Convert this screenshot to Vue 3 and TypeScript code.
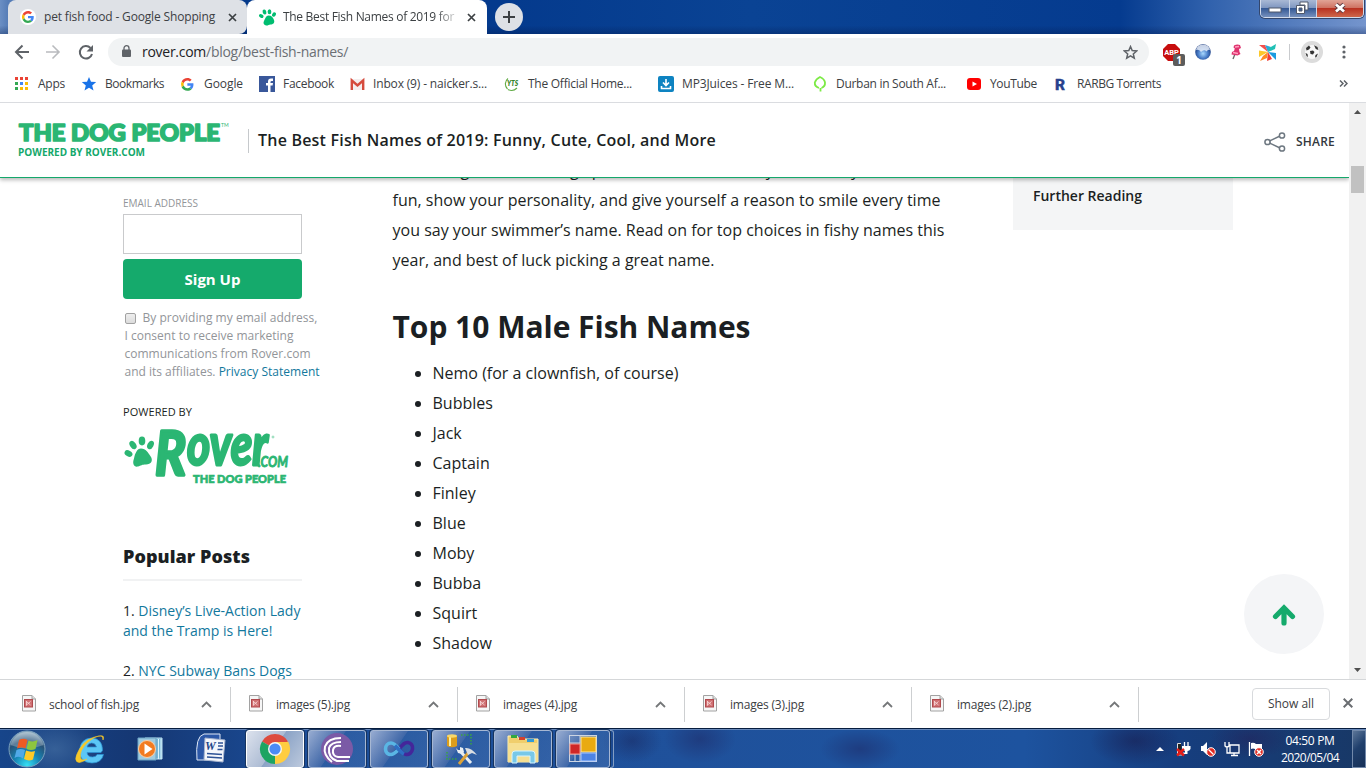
<script setup lang="ts">
interface Bookmark { label: string; icon: string; slot: number; fit: number }
interface FitTarget extends HTMLElement { textContent: string }

const bookmarks: Bookmark[] = [
  { label: 'Apps', icon: 'apps', slot: 67, fit: 27 },
  { label: 'Bookmarks', icon: 'star', slot: 99, fit: 59 },
  { label: 'Google', icon: 'google', slot: 79, fit: 39 },
  { label: 'Facebook', icon: 'facebook', slot: 90, fit: 51 },
  { label: 'Inbox (9) - naicker.s...', icon: 'gmail', slot: 155, fit: 114 },
  { label: 'The Official Home...', icon: 'yts', slot: 154, fit: 104 },
  { label: 'MP3Juices - Free M...', icon: 'mp3', slot: 154, fit: 112 },
  { label: 'Durban in South Af...', icon: 'tree', slot: 154, fit: 110 },
  { label: 'YouTube', icon: 'youtube', slot: 87, fit: 47 },
  { label: 'RARBG Torrents', icon: 'rarbg', slot: 110, fit: 84 },
]

const maleNames: string[] = [
  'Nemo (for a clownfish, of course)', 'Bubbles', 'Jack', 'Captain', 'Finley',
  'Blue', 'Moby', 'Bubba', 'Squirt', 'Shadow',
]

const downloads: { name: string; fit: number }[] = [
  { name: 'school of fish.jpg', fit: 90 },
  { name: 'images (5).jpg', fit: 74 },
  { name: 'images (4).jpg', fit: 74 },
  { name: 'images (3).jpg', fit: 74 },
  { name: 'images (2).jpg', fit: 74 },
]

const pinned: string[] = ['ie', 'wmp', 'word']
const running: string[] = ['chrome', 'bittorrent', 'vs', 'tools', 'explorer', 'forms']

// Spreads letter spacing so that a label takes exactly the given width.
const vFit = {
  mounted(el: FitTarget, binding: { value: number }) {
    const range = document.createRange()
    range.selectNodeContents(el)
    const natural = range.getBoundingClientRect().width
    el.style.letterSpacing = `${(binding.value - natural) / el.textContent.trim().length}px`
  },
}
</script>

<template>
  <div class="screen">
    <header class="tabstrip">
      <div class="tab tab-idle">
        <span class="favicon-disc">
          <svg width="12" height="12" viewBox="0 0 48 48"><path fill="#ea4335" d="M24 9.5c3.5 0 6.700 1.200 9.200 3.600l6.900-6.900C35.900 2.400 30.500 0 24 0 14.600 0 6.500 5.400 2.600 13.200l8 6.200C12.400 13.700 17.700 9.500 24 9.500z"/><path fill="#4285f4" d="M47 24.500c0-1.600-.2-3.100-.4-4.500H24v9h12.900c-.6 3-2.300 5.500-4.800 7.200l7.700 6C44.400 38 47 31.800 47 24.500z"/><path fill="#fbbc05" d="M10.500 28.600A14.500 14.500 0 0 1 10.500 19.400l-8-6.200A24 24 0 0 0 2.500 34.800z"/><path fill="#34a853" d="M24 48c6.500 0 11.900-2.100 15.900-5.800l-7.700-6c-2.200 1.500-4.900 2.300-8.200 2.300-6.300 0-11.600-4.200-13.500-9.900l-8 6.200C6.500 42.600 14.600 48 24 48z"/></svg>
        </span>
        <span v-fit="171" class="tab-title">pet fish food - Google Shopping</span>
        <svg class="tab-close" width="9" height="9" viewBox="0 0 9 9"><path d="M1 1l7 7M8 1l-7 7" stroke="#3c4043" stroke-width="1.7"/></svg>
      </div>
      <div class="tab tab-active">
        <svg class="paw" width="17" height="17" viewBox="0 0 34 34" fill="#00bd70"><ellipse cx="4.500" cy="14" rx="3.500" ry="4.700" transform="rotate(-60 4.500 14)"/><ellipse cx="11" cy="6" rx="3.700" ry="5" transform="rotate(-18 11 6)"/><ellipse cx="21" cy="5.500" rx="3.700" ry="5"/><ellipse cx="30" cy="11" rx="3.500" ry="4.800" transform="rotate(30 30 11)"/><path d="M19 13c6 0 9 4 11 9 2 6-2 9-7 9-4 0-5 3-9 2-5-1-6-6-4-9 2-4 4-11 9-11z"/></svg>
        <span v-fit="171" class="tab-title tab-fade">The Best Fish Names of 2019 for</span>
        <svg class="tab-close" width="9" height="9" viewBox="0 0 9 9"><path d="M1 1l7 7M8 1l-7 7" stroke="#3c4043" stroke-width="1.7"/></svg>
      </div>
      <span class="new-tab"><svg width="12" height="12" viewBox="0 0 12 12"><path d="M6 0v12M0 6h12" stroke="#3c4043" stroke-width="2"/></svg></span>
      <div class="window-controls">
        <span class="wc wc-min"><svg width="14" height="6" viewBox="0 0 14 6"><rect x="1" y="1" width="12" height="4" fill="#fff" stroke="#51596b"/></svg></span>
        <span class="wc wc-restore"><svg width="14" height="14" viewBox="0 0 14 14"><path d="M5 1h8v8h-3v-5h-5z" fill="#fff" stroke="#51596b"/><path fill-rule="evenodd" d="M1.500 4.500h8v8h-8zM4 7v3h3V7z" fill="#fff" stroke="#51596b"/></svg></span>
        <span class="wc wc-close"><svg width="14" height="12" viewBox="0 0 14 12"><path d="M3 2.500l8 7M11 2.500l-8 7" stroke="#5d3a40" stroke-width="4.500"/><path d="M3 2.500l8 7M11 2.500l-8 7" stroke="#fff" stroke-width="2.800"/></svg></span>
      </div>
    </header>

    <div class="toolbar">
      <svg class="nav-icons" width="82" height="18" viewBox="0 0 82 18" fill="none">
        <path d="M15 9H2.500M8.500 2.500L2 9l6.500 6.500" stroke="#5f6368" stroke-width="2"/>
        <path d="M32 9h12.500M38.500 2.500L45 9l-6.500 6.500" stroke="#b9bbbe" stroke-width="1.600"/>
        <path d="M76.500 5A6.200 6.200 0 1 0 78 11" stroke="#5f6368" stroke-width="2"/><path d="M79 2v6.500h-6.500z" fill="#5f6368"/>
      </svg>
      <div class="omnibox">
        <svg class="lock" width="9" height="12" viewBox="0 0 9 12"><rect y="4.500" width="9" height="7.500" rx="1" fill="#5f6368"/><path d="M2 5V3.200a2.500 2.500 0 0 1 5 0V5" fill="none" stroke="#5f6368" stroke-width="1.300"/></svg>
        <span v-fit="206" class="url"><b>rover.com</b>/blog/best-fish-names/</span>
        <svg class="bookmark-star" width="15" height="15" viewBox="0 0 15 15"><path d="M7.500 1.600l1.700 4 4.400.4-3.300 2.900 1 4.300-3.800-2.300-3.800 2.300 1-4.300L1.400 6l4.400-.4z" fill="none" stroke="#5f6368" stroke-width="1.500"/></svg>
      </div>
      <div class="extensions">
        <span class="abp"><svg width="17" height="17" viewBox="0 0 17 17"><path d="M5 0h7l5 5v7l-5 5H5l-5-5V5z" fill="#c70d0d"/><text x="8.500" y="11.300" font-size="7.500" font-weight="700" text-anchor="middle" fill="#fff" font-family="Roboto, sans-serif">ABP</text></svg><i>1</i></span>
        <svg class="globe" width="16" height="16" viewBox="0 0 16 16"><defs><radialGradient id="globe" cx=".5" cy=".6" r=".55"><stop offset="0" stop-color="#a9d9ff"/><stop offset=".55" stop-color="#4b7fc9"/><stop offset="1" stop-color="#1e3f83"/></radialGradient></defs><circle cx="8" cy="8" r="7.800" fill="url(#globe)"/><path d="M1 6Q2 .8 8 .700T15 6Q13 5 11.500 7.500 9 5 6 8 4 5 1 6z" fill="#f1f5fb" opacity=".8"/></svg>
        <svg class="pin" width="12" height="16" viewBox="0 0 12 16"><path d="M5 10l-2 5" stroke="#666" stroke-width="1.300"/><path d="M4 1.500Q7 0 10 1l1 3-2 1 .5 3 1 2-3 1.500-6-1L2 8l2-1 .8-2.500L3.500 3.500z" fill="#df3470"/><path d="M5 3l4-.5M3 8.500l5 1" stroke="#ff9fbd" stroke-width="1.300"/></svg>
        <svg class="pinwheel" width="17" height="17" viewBox="0 0 17 17"><path d="M0 1h6l3 7z" fill="#f3504c"/><path d="M6 1l6 2-3 5z" fill="#2aa8d8"/><path d="M9 8L10 4l7-4-1 5z" fill="#1fc0b5"/><path d="M9 8l8 1v7z" fill="#1b9be0"/><path d="M9 8l-1 6-7 3 3-5z" fill="#ff8a22"/><path d="M9 8l4 7-5 2z" fill="#f13d38"/><path d="M0 6.500L9 8l-9 5z" fill="#fcc82b"/></svg>
        <span class="divider"></span>
        <svg class="avatar" width="22" height="22" viewBox="0 0 22 22"><circle cx="11" cy="11" r="11" fill="#dcdcdc"/><circle cx="11" cy="11" r="7" fill="#f8f8f8"/><path d="M5 7l3-2.500 1.500 2L8 8.500l-2.500 1zM13 4.200l3.500 1.800.8 3-2.500-1zM9 10l3-.5 1.500 1.500-1.500 2.500-2.500-.5zM4.500 12l2 1 .5 3-1.500-1zM14.500 14l2.500-1.500-1.500 3.500-1.500.5z" fill="#333"/></svg>
        <svg class="kebab" width="4" height="14" viewBox="0 0 4 14" fill="#5f6368"><circle cx="2" cy="2" r="1.600"/><circle cx="2" cy="7" r="1.600"/><circle cx="2" cy="12" r="1.600"/></svg>
      </div>
    </div>

    <nav class="bookmarks">
      <span v-for="b in bookmarks" :key="b.label" class="bookmark" :style="{ width: b.slot + 'px' }">
        <svg width="16" height="16" viewBox="0 0 16 16">
          <template v-if="b.icon === 'apps'"><path fill="#ea4335" d="M1 1h3v3H1zM6 1h3v3H6zM11 1h3v3h-3z"/><path fill="#34a853" d="M1 6h3v3H1zM1 11h3v3H1z"/><path fill="#4285f4" d="M6 6h3v3H6z"/><path fill="#fbbc05" d="M11 6h3v3h-3zM6 11h3v3H6zM11 11h3v3h-3z"/></template>
          <path v-else-if="b.icon === 'star'" fill="#1a73e8" d="M8 1l2 4.700 5.200.4-4 3.400 1.300 5L8 11.800l-4.500 2.700 1.300-5-4-3.400L6 5.700z"/>
          <g v-else-if="b.icon === 'google'" transform="translate(1 2) scale(.265)"><path fill="#ea4335" d="M24 9.500c3.500 0 6.700 1.200 9.200 3.600l6.900-6.900C35.900 2.400 30.500 0 24 0 14.600 0 6.500 5.400 2.600 13.200l8 6.200C12.400 13.700 17.700 9.500 24 9.500z"/><path fill="#4285f4" d="M47 24.500c0-1.600-.2-3.100-.4-4.500H24v9h12.900c-.6 3-2.300 5.500-4.800 7.200l7.700 6C44.400 38 47 31.800 47 24.500z"/><path fill="#fbbc05" d="M10.500 28.600A14.500 14.500 0 0 1 10.500 19.400l-8-6.200A24 24 0 0 0 2.500 34.800z"/><path fill="#34a853" d="M24 48c6.500 0 11.900-2.100 15.900-5.800l-7.700-6c-2.200 1.500-4.900 2.300-8.200 2.300-6.300 0-11.600-4.200-13.500-9.900l-8 6.200C6.500 42.600 14.600 48 24 48z"/></g>
          <template v-else-if="b.icon === 'facebook'"><rect width="16" height="16" fill="#39579a"/><path d="M9 16V9.500H7V7h2V5.500Q9 2.500 12 2.500h2V5h-1.200Q11.500 5 11.500 6v1H14l-.4 2.500h-2.100V16z" fill="#fff"/></template>
          <template v-else-if="b.icon === 'gmail'"><rect x="2" y="3" width="13" height="11" fill="#f4eeee"/><path d="M2.800 14V4.500l5.700 5 5.700-5V14" fill="none" stroke="#d54b3d" stroke-width="2.400"/></template>
          <template v-else-if="b.icon === 'yts'"><path d="M4 2.500A7 7 0 0 0 3.500 13M4 13.500q5 2.500 9-1.500" fill="none" stroke="#60ab45" stroke-width="1.100"/><text x="8.600" y="10.300" text-anchor="middle" font-size="6.500" font-weight="800" font-style="italic" fill="#35842c" font-family="Lato, sans-serif">YTS</text></template>
          <template v-else-if="b.icon === 'mp3'"><rect width="16" height="16" y="0" rx="2" fill="#0e83c1"/><path d="M8 3v6M5 6.500l3 3 3-3M3.500 10v2.500h9V10" fill="none" stroke="#fff" stroke-width="1.600"/></template>
          <path v-else-if="b.icon === 'tree'" d="M8.500 15.500V12M7 12Q2.500 10.500 2.800 6.500 4 3 8 1q4.500 2 5 5.500.3 4-3.500 5.500" fill="none" stroke="#7cea45" stroke-width="1.800"/>
          <template v-else-if="b.icon === 'youtube'"><rect x="1" y="2" width="14" height="12" rx="3" fill="#f00"/><path d="M6.500 5.500v5L11 8z" fill="#fff"/></template>
          <text v-else x="2" y="13.500" font-size="15.500" font-weight="900" fill="#28428d" stroke="#28428d" stroke-width=".3" font-family="Roboto, sans-serif">R</text>
        </svg>
        <span v-fit="b.fit">{{ b.label }}</span>
      </span>
      <span class="more"><svg width="9" height="7" viewBox="0 0 9 7"><path d="M1 .5l3 3-3 3M5 .5l3 3-3 3" fill="none" stroke="#5f6368" stroke-width="1.500"/></svg></span>
    </nav>

    <div class="viewport">
      <div class="page">
        <div class="site-bar">
          <svg class="site-logo" width="212" height="38" viewBox="0 0 212 38">
            <text x="1" y="18.500" font-size="22.500" font-weight="900" fill="#2bb673" stroke="#2bb673" stroke-width="1.700" stroke-linejoin="round" textLength="201" lengthAdjust="spacingAndGlyphs" font-family="Lato, sans-serif">THE DOG PEOPLE</text>
            <text x="203" y="4.500" font-size="5" fill="#2bb673" font-family="Lato, sans-serif">TM</text>
            <text x="0" y="34" font-size="10" font-weight="700" fill="#14a86b" textLength="127" lengthAdjust="spacingAndGlyphs" font-family="Open Sans, sans-serif">POWERED BY ROVER.COM</text>
          </svg>
          <strong v-fit="458" class="article-title">The Best Fish Names of 2019: Funny, Cute, Cool, and More</strong>
          <span class="share">
            <svg width="22" height="20" viewBox="0 0 22 20" fill="none" stroke="#6d7780" stroke-width="1.500"><path d="M5.500 9l10.500-5M5.500 11l10.500 5"/><circle cx="3.500" cy="10" r="2.600"/><circle cx="18" cy="3.500" r="2.600"/><circle cx="18" cy="16.500" r="2.600"/></svg>
            <span v-fit="39">SHARE</span>
          </span>
        </div>
        <div class="columns">
          <aside class="sidebar">
            <label class="field-label"><span v-fit="75">EMAIL ADDRESS</span></label>
            <div class="email-input"></div>
            <button class="signup">Sign Up</button>
            <p class="consent"><i class="checkbox"></i><span v-fit="175">By providing my email address,</span><br><span v-fit="169">I consent to receive marketing</span><br><span v-fit="186">communications from Rover.com</span><br><span v-fit="91">and its affiliates.</span> <a v-fit="101">Privacy Statement</a></p>
            <div class="powered"><span v-fit="69">POWERED BY</span></div>
            <svg class="rover-logo" width="168" height="58" viewBox="0 0 168 58" fill="#2bb673" stroke="#2bb673">
              <g stroke="none"><ellipse cx="5.500" cy="25.500" rx="3" ry="4.200" transform="rotate(-60 5.500 25.500)"/><ellipse cx="10" cy="17" rx="3" ry="4.500" transform="rotate(-35 10 17)"/><ellipse cx="19" cy="13" rx="3.300" ry="4.400"/><ellipse cx="27.500" cy="17" rx="3" ry="4.400" transform="rotate(28 27.500 17)"/><path d="M18 20.500c5 0 7 4 9 7 4 5 1 9-4 9-4 0-5 1-8 2-4 1-6-3-4-8 1-5 3-10 7-10z"/></g>
              <g font-family="Lato, sans-serif" font-style="italic" font-weight="700" stroke-linejoin="round">
                <text x="32" y="47" font-size="62" stroke-width="3.500" textLength="31" lengthAdjust="spacingAndGlyphs">R</text>
                <text x="64" y="37" font-size="57" stroke-width="2.800" textLength="81" lengthAdjust="spacingAndGlyphs">over</text>
                <text x="135" y="39" font-size="14.500" stroke-width=".8" textLength="30" lengthAdjust="spacingAndGlyphs">.COM</text>
              </g>
              <circle cx="150" cy="9" r="1" fill="none" stroke-width=".5"/>
              <text x="70" y="54.500" font-size="11" font-weight="900" stroke-width=".7" textLength="93" lengthAdjust="spacingAndGlyphs" font-family="Lato, sans-serif">THE DOG PEOPLE</text>
            </svg>
            <h3><span v-fit="127">Popular Posts</span></h3>
            <ol class="posts">
              <li>1. <a>Disney’s Live-Action Lady<br>and the Tramp is Here!</a></li>
              <li>2. <a>NYC Subway Bans Dogs</a></li>
            </ol>
          </aside>
          <main class="article">
            <p>
              <span v-fit="507">something catchier? Bring up a fish, a tank, and every kind of way to be</span><br>
              <span v-fit="548">fun, show your personality, and give yourself a reason to smile every time</span><br>
              <span v-fit="552">you say your swimmer’s name. Read on for top choices in fishy names this</span><br>
              <span v-fit="322">year, and best of luck picking a great name.</span>
            </p>
            <h2><span v-fit="358">Top 10 Male Fish Names</span></h2>
            <ul><li v-for="n in maleNames" :key="n">{{ n }}</li></ul>
          </main>
          <aside class="toc"><span v-fit="109">Further Reading</span></aside>
        </div>
        <span class="to-top"><svg width="24" height="22" viewBox="0 0 24 22"><path d="M12 19V5M3.500 12.500L12 4l8.500 8.500" fill="none" stroke="#15aa6c" stroke-width="5.200" stroke-linecap="round"/></svg></span>
      </div>
      <div class="scrollbar">
        <svg width="7" height="4" viewBox="0 0 7 4"><path d="M0 4l3.500-4L7 4z" fill="#505050"/></svg>
        <span class="thumb"></span>
        <svg class="down" width="7" height="4" viewBox="0 0 7 4"><path d="M0 0h7L3.500 4z" fill="#505050"/></svg>
      </div>
    </div>

    <div class="downloads">
      <div v-for="d in downloads" :key="d.name" class="download">
        <svg width="14" height="17" viewBox="0 0 14 17"><path d="M.5.500h9.500l3.500 3.500v12H.5z" fill="#f6f6f6" stroke="#a2a2a2"/><path d="M10 .5V4h3.500" fill="#ddd" stroke="#a2a2a2"/><rect x="2.500" y="4.500" width="8" height="7.500" fill="#cf7072" stroke="#b04a4e"/><path d="M4.500 6.500l4 3.500M8.500 6.500l-4 3.500M4.500 6v4.500" stroke="#fbe0e0" stroke-width=".8"/></svg>
        <span v-fit="d.fit" class="file-name">{{ d.name }}</span>
        <svg class="chevron" width="11" height="7" viewBox="0 0 11 7"><path d="M1 6l4.500-4.500L10 6" fill="none" stroke="#757779" stroke-width="1.800"/></svg>
      </div>
      <span class="show-all"><span v-fit="46">Show all</span></span>
      <svg class="close-bar" width="10" height="10" viewBox="0 0 10 10"><path d="M.7.700l8.600 8.600M9.300.700L.7 9.300" stroke="#6a6d71" stroke-width="2"/></svg>
    </div>

    <footer class="taskbar">
      <svg class="start" width="38" height="38" viewBox="0 0 38 38">
        <defs><radialGradient id="orb" cx=".5" cy=".95" r=".9"><stop offset="0" stop-color="#35e0f4"/><stop offset=".4" stop-color="#1685b5"/><stop offset=".75" stop-color="#285277"/><stop offset="1" stop-color="#8eabbf"/></radialGradient></defs>
        <circle cx="19" cy="19" r="18" fill="url(#orb)" stroke="#7ba1bd"/><path d="M2.500 15a17 17 0 0 1 33 0Q19 22 2.500 15z" fill="#fff" opacity=".25"/>
        <path d="M11 10q4.500-2.500 8.500 0l-2 8.500q-4-2-8.500 0z" fill="#ee5a24"/><path d="M20.500 10.500q4.500 2 9-.5l-2 9q-4.500 2-9 0z" fill="#8dc63f"/><path d="M8.500 20q4-2 8.500 0l-2 8.500q-4-3-8.500-.5z" fill="#51a9e8"/><path d="M18 20.500q4.500 2 9 .5l-2 8.500q-4.500 2-9-.5z" fill="#ffca28"/>
      </svg>
      <div class="pinned">
        <svg v-for="p in pinned" :key="p" :class="p" width="34" height="34" viewBox="0 0 34 34">
          <template v-if="p === 'ie'"><path d="M29 20.500H15q.5 4.500 5.500 4.500 3.500 0 4.500-2.500h6.500Q29.500 31 20 31 7.500 30.500 7.500 18.500 8.500 6.500 19.500 6 30.500 6.500 30.500 18.500zM15 15h9.500Q23.500 11 19.700 11 16 11 15 15z" fill="#5cc7f5" stroke="#2b93d6" stroke-width=".7"/><path d="M31 8q2-5-3-4Q15 5 7.500 17 0 30 7.500 30.500 11 30 15 27q-5 2.500-6.500-1Q7 19 15 11 24 3 29 4q2 .5 2 4z" fill="#f6c829" stroke="#f6c829" stroke-width=".6"/></template>
          <template v-else-if="p === 'wmp'"><path d="M13 6h17v21H13z" fill="#78b7d6" stroke="#bde1f2"/><path d="M26.500 7v20M29 7v20" stroke="#dcf5ff"/><path d="M6 6h18v22H6z" fill="#9fcbe0" stroke="#6aa3c4"/><circle cx="15" cy="17" r="8.500" fill="#f27b21" stroke="#f8d0aa"/><path d="M12.500 11.500v11l8-5.500z" fill="#fff"/></template>
          <template v-else><path d="M2 28Q0 4 9 2h16v26z" fill="#2c58a8" stroke="#dfe8f6"/><path d="M10 6l20 2-2 22-19-2z" fill="#f4f6fb" stroke="#a9b6cf"/><text x="10" y="18" font-size="12" font-weight="800" font-style="italic" fill="#1e4489" font-family="Liberation Serif, serif">W</text><path d="M23 11h5M23 14h5M22.500 17.500h5M12 21.500l15 1M12 25l15 1" stroke="#2d5296" stroke-width="1.700"/></template>
        </svg>
      </div>
      <div class="running">
        <span v-for="r in running" :key="r" class="task" :class="'task-' + r">
          <svg width="32" height="32" viewBox="0 0 32 32">
            <template v-if="r === 'chrome'"><path d="M16 16L3 8.500A15 15 0 0 1 29 8.500z" fill="#dd4b3e"/><path d="M16 16L29 8.500A15 15 0 0 1 16 31z" fill="#ffcd40"/><path d="M16 16v15A15 15 0 0 1 3 8.500z" fill="#1da462"/><path d="M16 9h13.500l-7 11-6.500 11 4-11z" fill="#ffcd40"/><circle cx="16" cy="16" r="7" fill="#f6f6f6"/><circle cx="16" cy="16" r="5.600" fill="#4c8bf5"/></template>
            <template v-else-if="r === 'bittorrent'"><circle cx="16" cy="16" r="16" fill="#7b5aa6"/><g fill="none" stroke="#fff" stroke-width="2"><path d="M20 5Q7 5 4 13.500 2 22 11 29M20 9Q10 9 8 15 7 25 16 28h12M20 13q-7-1-8 4-1 6 5 7h12"/></g></template>
            <template v-else-if="r === 'vs'"><g fill="none" stroke-width="3.600"><path d="M16 16C20 11 22 9 25 9.500c3 .5 5 3 4.500 6.500S26 22 23 21.500s-5-3-7-5.500" stroke="#44269a"/><path d="M16 16C13 12 11 10 8 10s-5.500 2.500-5.500 6S5 21.500 8 21.500s5.500-3 8-5.500" stroke="#5ab6e4"/><path d="M12 12.500c3 3 6 7 9 8.500" stroke="#2d6fc4"/></g></template>
            <template v-else-if="r === 'tools'"><path d="M2 3v10q5 2.500 10 0V3z" fill="#dc9d1b"/><path d="M4 3v10h2V3z" fill="#fff0a0"/><ellipse cx="7" cy="3" rx="5" ry="1.700" fill="#f8d86a"/><path d="M16 2h10v11M2 19v7h10" fill="none" stroke="#3aa440" stroke-width="1.500" stroke-dasharray="1.500 1.500"/><path d="M15 18l11 12" fill="none" stroke="#e8edf2" stroke-width="3"/><path d="M11 15l2 5 4 1 2-2-1-4-3-1v3h-2z" fill="#e8edf2"/><path d="M14 31l10-12" stroke="#dca238" stroke-width="3"/><path d="M20 15q6-1 12 7l-5-2-4 2z" fill="#d9dde2"/></template>
            <template v-else-if="r === 'explorer'"><path d="M1 3h9l2 3h19v23H1z" fill="#f0ce6c" stroke="#fff2b6"/><path d="M4 2h6v3H4z" fill="#33a83e"/><path d="M12 4h6v3h-6z" fill="#d3422c"/><path d="M20 6h7v3h-7z" fill="#319bd9"/><path d="M1 10h30v19H1z" fill="#f6df91"/><path d="M5 30V21q0-3 3-3h17q3 0 3 3v9h-5v-7H10v7z" fill="#78c8e8" stroke="#d5f4ff"/></template>
            <template v-else><rect x="2.500" y="2.500" width="27" height="26" fill="none" stroke="#ccd5e3"/><path d="M13 2v27M2 10h11M2 21h28M8 21v8" stroke="#ccd5e3"/><rect x="14" y="4" width="15" height="15" fill="#e9aa11" stroke="#ffe696"/><rect x="3" y="11" width="10" height="10" fill="#cf2727" stroke="#f69a8b"/><rect x="14" y="20" width="15" height="8" fill="#4d83e4" stroke="#a9c8ff"/></template>
          </svg>
        </span>
        <span class="stack-edge"></span>
      </div>
      <div class="tray">
        <svg width="8" height="4" viewBox="0 0 8 4"><path d="M0 4l4-4 4 4z" fill="#fff"/></svg>
        <svg class="tray-icon" width="16" height="16" viewBox="0 0 16 16"><path d="M5 2.500H1.500V14H6" fill="#222" stroke="#ddd"/><path d="M8.500 1v4M12 1v4" stroke="#fff" stroke-width="1.300"/><path d="M6 5h8.500v3q-1 2-3 2v3H7v-1.500h2V10Q6 9 6 8z" fill="#fff"/><path d="M1 8l7 6.500M8 8l-7 6.500" stroke="#e71b16" stroke-width="2.500"/></svg>
        <svg class="tray-icon" width="16" height="16" viewBox="0 0 16 16"><path d="M1 5h2l4-4v13l-4-4H1z" fill="#fff"/><circle cx="11" cy="11" r="4.300" fill="#e22b22" stroke="#fff"/><path d="M8.500 8.500l5 5" stroke="#fff" stroke-width="1.300"/></svg>
        <svg class="tray-icon" width="16" height="16" viewBox="0 0 16 16"><path d="M6 4h9v8H6zM7 14.500h7M10 12v2M1 1v4q2 2 4 0V1M3 6v6h3" fill="none" stroke="#fff" stroke-width="1.300"/></svg>
        <svg class="tray-icon" width="16" height="16" viewBox="0 0 16 16"><path d="M1.500 1v14" stroke="#fff" stroke-width="1.300"/><path d="M3 2q3-1 5 1h6v7Q9 9 7 8T3 8z" fill="#fff"/><circle cx="11" cy="11" r="4.300" fill="#e22b22" stroke="#fff"/><path d="M9 9l4 4M13 9l-4 4" stroke="#fff" stroke-width="1.500"/></svg>
        <div class="clock"><span v-fit="49">04:50 PM</span><span v-fit="58">2020/05/04</span></div>
        <span class="show-desktop"></span>
      </div>
    </footer>
  </div>
</template>

<style>
html, body { margin: 0; overflow: hidden; }
</style>

<style scoped>
* { box-sizing: border-box; }
svg { display: block; flex: none; }
.screen { width: 1366px; height: 768px; overflow: hidden; display: flex; flex-direction: column; background: #fff; font: 12px/16px "Open Sans", "Noto Sans", sans-serif; color: #3c4043; white-space: nowrap; }

.tabstrip { height: 34px; flex: none; display: flex; align-items: flex-start; padding-left: 8px; background: linear-gradient(180deg, transparent 75%, rgba(3, 25, 75, .35)), linear-gradient(90deg, #6b8fc4 0, #567db7 8px, #04398a 240px, #043a8d 500px, #0a4394 750px, #053b8f 1120px, #3162ad 1210px, #7595cd 1366px); }
.tab { height: 34px; display: flex; align-items: center; position: relative; }
.tab-idle { width: 239px; background: #dee1e6; border-radius: 8px 8px 8px 0; padding-left: 11px; }
.tab-active { width: 240px; background: #fff; border-radius: 8px 8px 0 0; padding-left: 12px; }
.favicon-disc { width: 16px; height: 16px; border-radius: 50%; background: #fff; display: grid; place-items: center; margin-left: 1px; }
.tab-title { width: 172px; overflow: hidden; margin-left: 8px; }
.tab-active .tab-title { margin-left: 7px; }
.tab-fade { -webkit-mask-image: linear-gradient(90deg, #000 152px, transparent 178px); mask-image: linear-gradient(90deg, #000 152px, transparent 178px); }
.tab-close { margin-left: 12px; }
.new-tab { width: 28px; height: 28px; margin: 3px 0 0 8px; border-radius: 50%; background: #dee1e6; display: grid; place-items: center; }
.window-controls { margin: 0 2px 0 auto; width: 104px; height: 18px; display: flex; border: 1px solid #d3dcec; border-top: 0; border-radius: 0 0 5px 5px; overflow: hidden; box-shadow: 0 0 0 1px #33466c; }
.wc { display: grid; place-items: center; background: linear-gradient(#a9b9d5, #8097c1 45%, #365995 50%, #7590bd); border-right: 1px solid #cbd6e8; padding-bottom: 2px; }
.wc-min { width: 29px; padding-top: 5px; }
.wc-restore { width: 27px; padding-right: 3px; }
.wc-close { flex: 1; border: 0; background: linear-gradient(#e1a496, #cf7363 45%, #b93221 50%, #ce674b); }

.toolbar { height: 36px; flex: none; display: flex; align-items: center; padding-left: 14px; }
.nav-icons { margin-right: 12px; }
.omnibox { width: 1041px; height: 28px; border-radius: 14px; background: #f1f3f4; display: flex; align-items: center; }
.lock { margin: -2px 11px 0 14px; }
.url { font-size: 14px; color: #6b6f74; }
.url b { font-weight: 400; color: #202124; }
.bookmark-star { margin: 0 11px 0 auto; }
.extensions { flex: 1; display: flex; align-items: center; padding-left: 14px; }
.abp { position: relative; }
.abp i { position: absolute; left: 10px; top: 10px; width: 12px; height: 12px; background: #5c5c5c; color: #fff; border-radius: 2px; font: 700 10px/12px "Open Sans", sans-serif; text-align: center; }
.globe { margin-left: 15px; }
.pin { margin-left: 19px; }
.pinwheel { margin-left: 17px; }
.divider { width: 1px; height: 16px; background: #c9cbce; margin: 0 11px 0 13px; }
.kebab { margin-left: 19px; }

.bookmarks { height: 33px; flex: none; display: flex; align-items: center; padding: 0 18px 5px 14px; border-bottom: 1px solid #dadce0; }
.bookmark { display: flex; align-items: center; gap: 8px; flex: none; }
.more { margin-left: auto; }

.viewport { height: 576px; flex: none; display: flex; overflow: hidden; }
.page { width: 1349px; position: relative; overflow: hidden; }
.site-bar { height: 75px; position: relative; z-index: 2; background: #fff; border-bottom: 1px solid #14a86b; box-shadow: 0 2px 4px rgba(0, 0, 0, .28); display: flex; align-items: center; padding: 0 14px 0 18px; }
.site-logo { overflow: visible; margin-top: 2px; }
.article-title { margin-left: 18px; padding-left: 9px; border-left: 1px solid #c6c9cc; height: 24px; margin-top: 2px; font: 600 16px/22px "Open Sans", sans-serif; color: #1b1f23; }
.share { margin-left: auto; display: flex; align-items: center; gap: 10px; font-weight: 600; color: #33383d; padding-top: 4px; }
.columns { height: 501px; display: flex; overflow: hidden; color: #1b1f23; }
.sidebar { width: 179px; margin-left: 123px; padding-top: 18px; }
.field-label { display: block; height: 18px; font-size: 10px; line-height: 14px; color: #929599; }
.email-input { height: 40px; border: 1px solid #c9cacc; }
.signup { display: block; width: 179px; height: 40px; margin-top: 5px; border: 0; border-radius: 4px; background: #15aa6c; color: #fff; font: 700 15px/40px "Open Sans", sans-serif; padding: 0; }
.consent { margin: 10px 0 0 1.500px; font-size: 12px; line-height: 18px; color: #929599; }
.checkbox { display: inline-block; width: 11px; height: 11px; margin-right: 7px; border: 1px solid #a2a2a2; border-radius: 2px; background: linear-gradient(#eee, #dcdcdc); vertical-align: -2px; }
a { color: #12789d; }
.powered { margin-top: 23px; font-size: 11px; line-height: 16px; }
.rover-logo { margin: 8px 0 0 0; overflow: visible; }
h3 { margin: 57px 0 0; height: 38px; border-bottom: 2px solid #f1f2f3; font: 800 18px/26px "Open Sans", sans-serif; }
.posts { list-style: none; margin: 20px 0 0; padding: 0; font-size: 14px; line-height: 20px; }
.posts li { margin-bottom: 20px; }
.article { width: 560px; margin-left: 90.500px; font-size: 16px; line-height: 30px; }
.article p { margin: -23px 0 0; }
h2 { margin: 29px 0 0; font: 700 30px/46px "Open Sans", sans-serif; }
ul { margin: 8px 0 0; padding-left: 40px; }
.toc { width: 220px; height: 52px; margin-left: 60.500px; padding: 8px 0 0 20px; background: #f4f5f6; font-size: 14px; line-height: 20px; font-weight: 600; }
.to-top { position: absolute; right: 25px; bottom: 25px; width: 80px; height: 80px; border-radius: 50%; background: #f4f5f7; display: grid; place-items: center; padding-top: 2px; }
.scrollbar { width: 17px; background: #f1f1f1; display: flex; flex-direction: column; align-items: center; padding: 7px 0; }
.thumb { width: 13px; height: 27px; margin-top: 52px; background: #c1c1c1; }
.down { margin-top: auto; }

.downloads { height: 49px; flex: none; border-top: 1px solid #d5d7d9; display: flex; align-items: center; padding-left: 4px; }
.download { width: 227px; height: 35px; border-right: 1px solid #cdcfd1; display: flex; align-items: center; padding: 2px 18px 0 18px; }
.file-name { margin-left: 13px; }
.download svg:first-child { margin-top: -3px; }
.chevron { margin: -2px 0 0 auto; }
.show-all { width: 78px; height: 32px; margin-left: 113px; border: 1px solid #d8dadd; border-radius: 4px; display: grid; place-items: center; padding-bottom: 1px; }
.close-bar { margin: -2px 0 0 13px; }

.taskbar { height: 40px; flex: none; display: flex; align-items: center; border-top: 1px solid #071d3e; box-shadow: inset 0 1px #6788ba; background: radial-gradient(50px 34px at 55px 20px, rgba(62, 104, 157, .8), transparent), radial-gradient(30px 22px at 632px 12px, rgba(23, 26, 77, .4), transparent), radial-gradient(36px 24px at 700px 10px, rgba(30, 28, 85, .4), transparent), radial-gradient(40px 20px at 860px 20px, rgba(30, 28, 85, .4), transparent), radial-gradient(45px 25px at 1135px 12px, rgba(25, 22, 70, .5), transparent), radial-gradient(40px 20px at 1250px 10px, rgba(40, 24, 80, .4), transparent), linear-gradient(90deg, #17458a 0, #153773 10%, #1b4d98 22%, #1f519b 50%, #1d539f 75%, #163e7f 86%, #183866 100%); }
.start { margin-left: 8px; }
.pinned { width: 200px; display: flex; padding-left: 26px; gap: 26px; }
.word { margin-left: 3px; }
.running { display: flex; gap: 4px; }
.task { width: 58px; height: 38px; border: 1px solid #a6b7d3; border-radius: 3px; display: grid; place-items: center; background: linear-gradient(125deg, rgba(218, 223, 240, .65), rgba(130, 150, 195, .35) 45%, rgba(80, 125, 185, .3) 46%, rgba(90, 130, 190, .35)); box-shadow: 0 0 0 1px #17345f; }
.task-chrome { border-color: #fff; background: linear-gradient(125deg, #dce2ed, #adbcd4 48%, #8ba3c6 49%, #bcc9dd); }
.task-forms { width: 54px; }
.stack-edge { width: 4px; height: 38px; margin-left: -4px; border: 1px solid #849ec3; border-left: 0; border-radius: 0 3px 3px 0; }
.tray { margin-left: auto; height: 39px; display: flex; align-items: center; color: #fff; }
.tray svg:first-child { margin-right: 4px; }
.tray-icon { margin-left: 8px; }
.clock { width: 66px; margin: 0 9px 0 13px; display: flex; flex-direction: column; align-items: center; line-height: 17px; }
.show-desktop { width: 14px; height: 38px; border: 1px solid #7289aa; background: linear-gradient(135deg, #5c7698, #203f6c 45%, #163057); }
</style>
